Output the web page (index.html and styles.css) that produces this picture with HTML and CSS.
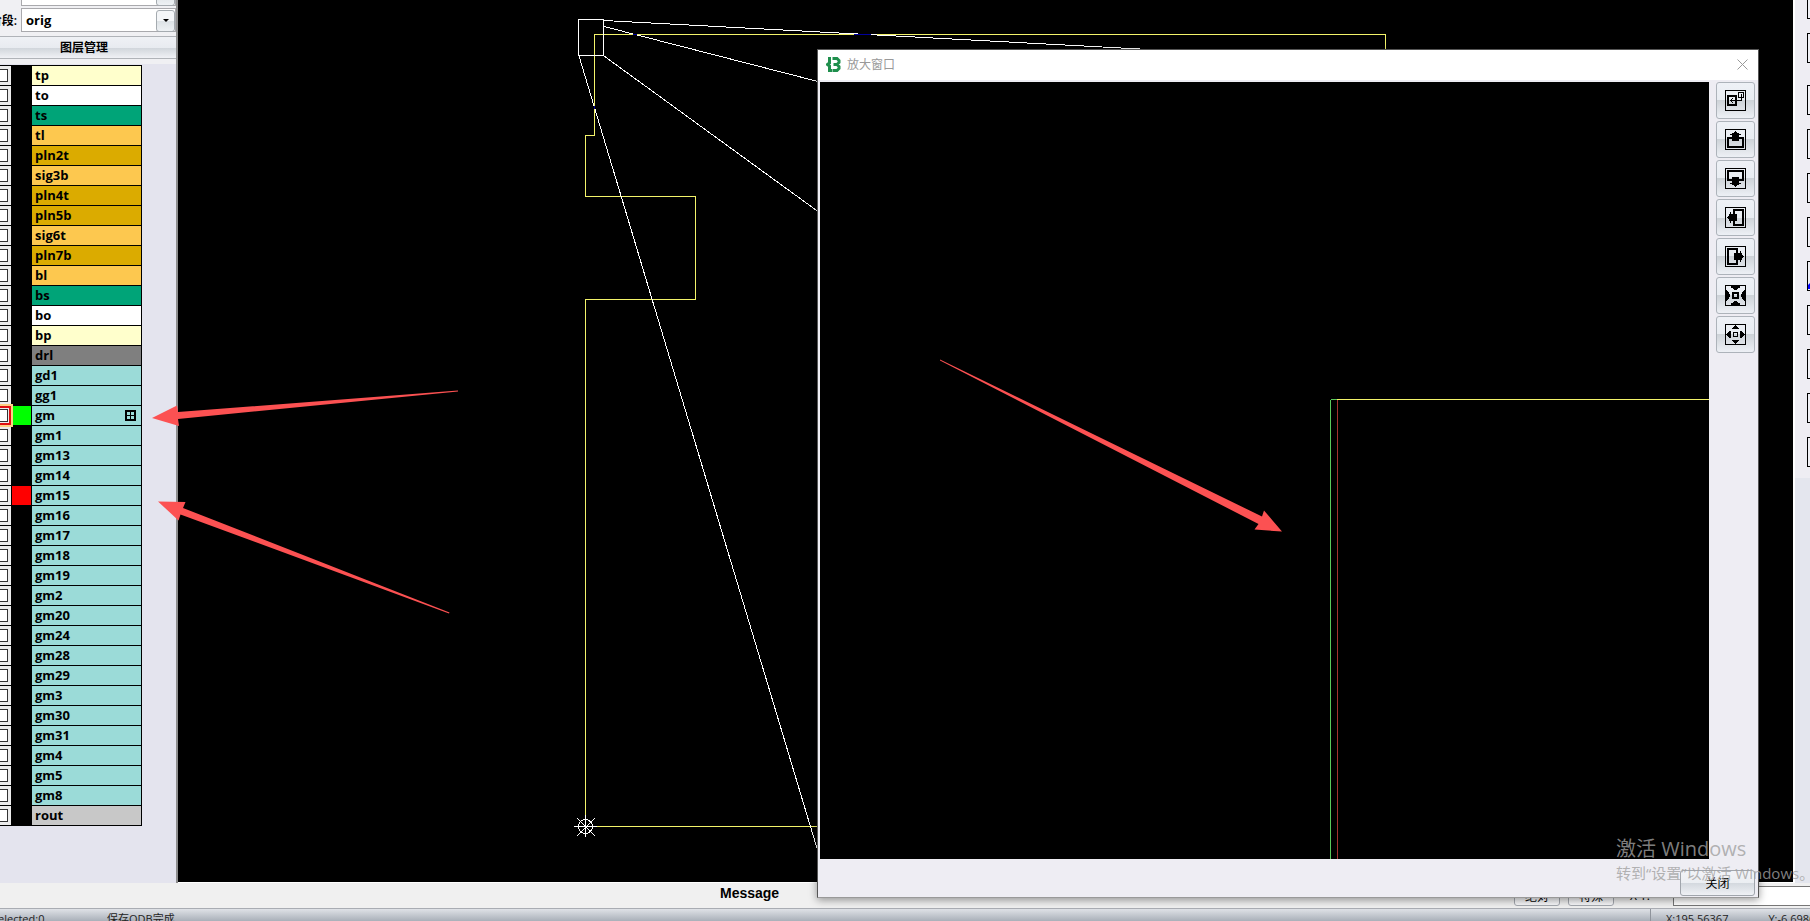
FILE: index.html
```
<!DOCTYPE html>
<html lang="zh-CN">
<head>
    <meta charset="UTF-8">
    <meta name="viewport" content="width=device-width, initial-scale=1.0">
    <title>图层管理</title>
    <link rel="stylesheet" href="styles.css">
</head>
<body>
    <div class="app">
        <div class="workspace">
            <!-- Layer panel -->
            <aside class="sidebar">
                <div class="field">
                    <span class="field-label"></span>
                    <span class="select-box"><select aria-label="料号"><option></option></select></span>
                </div>
                <div class="field">
                    <label class="field-label" for="step">阶段:</label>
                    <span class="select-box"><select id="step"><option>orig</option></select></span>
                </div>
                <h2 class="panel-title">图层管理</h2>
                <div class="layers">
                    <label class="layer paste"><span class="check"><input type="checkbox"></span><span class="swatch"></span><span class="name">tp</span></label>
                    <label class="layer silk"><span class="check"><input type="checkbox"></span><span class="swatch"></span><span class="name">to</span></label>
                    <label class="layer mask"><span class="check"><input type="checkbox"></span><span class="swatch"></span><span class="name">ts</span></label>
                    <label class="layer signal"><span class="check"><input type="checkbox"></span><span class="swatch"></span><span class="name">tl</span></label>
                    <label class="layer plane"><span class="check"><input type="checkbox"></span><span class="swatch"></span><span class="name">pln2t</span></label>
                    <label class="layer signal"><span class="check"><input type="checkbox"></span><span class="swatch"></span><span class="name">sig3b</span></label>
                    <label class="layer plane"><span class="check"><input type="checkbox"></span><span class="swatch"></span><span class="name">pln4t</span></label>
                    <label class="layer plane"><span class="check"><input type="checkbox"></span><span class="swatch"></span><span class="name">pln5b</span></label>
                    <label class="layer signal"><span class="check"><input type="checkbox"></span><span class="swatch"></span><span class="name">sig6t</span></label>
                    <label class="layer plane"><span class="check"><input type="checkbox"></span><span class="swatch"></span><span class="name">pln7b</span></label>
                    <label class="layer signal"><span class="check"><input type="checkbox"></span><span class="swatch"></span><span class="name">bl</span></label>
                    <label class="layer mask"><span class="check"><input type="checkbox"></span><span class="swatch"></span><span class="name">bs</span></label>
                    <label class="layer silk"><span class="check"><input type="checkbox"></span><span class="swatch"></span><span class="name">bo</span></label>
                    <label class="layer paste"><span class="check"><input type="checkbox"></span><span class="swatch"></span><span class="name">bp</span></label>
                    <label class="layer drill"><span class="check"><input type="checkbox"></span><span class="swatch"></span><span class="name">drl</span></label>
                    <label class="layer"><span class="check"><input type="checkbox"></span><span class="swatch"></span><span class="name">gd1</span></label>
                    <label class="layer"><span class="check"><input type="checkbox"></span><span class="swatch"></span><span class="name">gg1</span></label>
                    <label class="layer current"><span class="check"><input type="checkbox"></span><span class="swatch green"></span><span class="name">gm
                        <svg class="grid-mark" width="11" height="11" viewBox="0 0 11 11"><path d="M0 0h11v11H0z"/><path d="M2 2h3v3H2zM6 2h3v3H6zM2 6h3v3H2zM6 6h3v3H6z" fill="#9bdbd8"/></svg></span></label>
                    <label class="layer"><span class="check"><input type="checkbox"></span><span class="swatch"></span><span class="name">gm1</span></label>
                    <label class="layer"><span class="check"><input type="checkbox"></span><span class="swatch"></span><span class="name">gm13</span></label>
                    <label class="layer"><span class="check"><input type="checkbox"></span><span class="swatch"></span><span class="name">gm14</span></label>
                    <label class="layer"><span class="check"><input type="checkbox"></span><span class="swatch red"></span><span class="name">gm15</span></label>
                    <label class="layer"><span class="check"><input type="checkbox"></span><span class="swatch"></span><span class="name">gm16</span></label>
                    <label class="layer"><span class="check"><input type="checkbox"></span><span class="swatch"></span><span class="name">gm17</span></label>
                    <label class="layer"><span class="check"><input type="checkbox"></span><span class="swatch"></span><span class="name">gm18</span></label>
                    <label class="layer"><span class="check"><input type="checkbox"></span><span class="swatch"></span><span class="name">gm19</span></label>
                    <label class="layer"><span class="check"><input type="checkbox"></span><span class="swatch"></span><span class="name">gm2</span></label>
                    <label class="layer"><span class="check"><input type="checkbox"></span><span class="swatch"></span><span class="name">gm20</span></label>
                    <label class="layer"><span class="check"><input type="checkbox"></span><span class="swatch"></span><span class="name">gm24</span></label>
                    <label class="layer"><span class="check"><input type="checkbox"></span><span class="swatch"></span><span class="name">gm28</span></label>
                    <label class="layer"><span class="check"><input type="checkbox"></span><span class="swatch"></span><span class="name">gm29</span></label>
                    <label class="layer"><span class="check"><input type="checkbox"></span><span class="swatch"></span><span class="name">gm3</span></label>
                    <label class="layer"><span class="check"><input type="checkbox"></span><span class="swatch"></span><span class="name">gm30</span></label>
                    <label class="layer"><span class="check"><input type="checkbox"></span><span class="swatch"></span><span class="name">gm31</span></label>
                    <label class="layer"><span class="check"><input type="checkbox"></span><span class="swatch"></span><span class="name">gm4</span></label>
                    <label class="layer"><span class="check"><input type="checkbox"></span><span class="swatch"></span><span class="name">gm5</span></label>
                    <label class="layer"><span class="check"><input type="checkbox"></span><span class="swatch"></span><span class="name">gm8</span></label>
                    <label class="layer rout"><span class="check"><input type="checkbox"></span><span class="swatch"></span><span class="name">rout</span></label>
                </div>
            </aside>

            <!-- Board view -->
            <main class="stage">
                <svg class="drawing" width="100%" height="100%">
                    <g transform="translate(-178 0)" fill="none" shape-rendering="crispEdges">
                        <path stroke="#f3f36a" d="M1385.5 60V34.5H594.5V135.5H585.5V196.5H695.5V299.5H585.5V826.5H900"/>
                        <path stroke="#fff" d="M578.5 19.5h25v36h-25zM604 20.500L1140 49M604 26.500L818 81.500M604 56L818 211.500M579 56L819 855"/>
                        <path stroke="#00009c" d="M854 34.500h17M633 34.500h4M594.500 106v3"/>
                        <path stroke="#fff" d="M574 826.500h23M585.500 815v22M577 818l18 18M595 818l-18 18"/>
                        <circle stroke="#fff" cx="585.500" cy="826.500" r="7"/>
                    </g>
                </svg>
            </main>

            <!-- Right toolbar -->
            <nav class="tools">
                <button class="tool" aria-label="工具 1"></button>
                <button class="tool" aria-label="工具 2"></button>
                <button class="tool group" aria-label="工具 3"></button>
                <button class="tool" aria-label="工具 4"></button>
                <button class="tool" aria-label="工具 5"></button>
                <button class="tool" aria-label="工具 6"></button>
                <button class="tool" aria-label="工具 7"><svg width="28" height="28" viewBox="0 0 28 28"><path d="M0 27v-4l2-2 4 6z" fill="#00f"/></svg></button>
                <button class="tool" aria-label="工具 8"></button>
                <button class="tool" aria-label="工具 9"></button>
                <button class="tool" aria-label="工具 10"></button>
                <button class="tool" aria-label="工具 11"></button>
            </nav>
        </div>

        <div class="message-bar">
            <span class="message-title">Message</span>
            <div class="coords">
                <button class="small-btn">绝对</button>
                <button class="small-btn">特殊</button>
                <label class="xy-label" for="xy">X Y:</label>
                <input class="xy-input" id="xy" type="text">
            </div>
        </div>

        <footer class="status-bar">
            <span class="selected">Selected:0</span>
            <span class="state">保存ODB完成</span>
            <span class="position"><span>X:195.56367</span><span>Y:-6.69861</span></span>
        </footer>
    </div>

    <!-- Zoom window -->
    <section class="dialog">
        <header class="dialog-title">
            <svg width="15" height="15" viewBox="0 0 15 15" fill="none" stroke="#1f8f4d" stroke-width="3"><path d="M5 1.500H3.500V6L1.500 7.500 3.500 9v4.500H6"/><path d="M6.500 1.500H11l2 2v2l-2 2H7.500M11 7.500l2 2v2l-2 2H6.500"/></svg>
            <span>放大窗口</span>
            <button class="dialog-x" aria-label="关闭窗口"><svg width="11" height="11" viewBox="0 0 11 11" stroke="#999"><path d="M.5 .5l10 10M10.500 .5l-10 10"/></svg></button>
        </header>
        <div class="dialog-body">
            <div class="zoom-view">
                <svg class="drawing" width="100%" height="100%">
                    <g transform="translate(-820 -82)" fill="none" shape-rendering="crispEdges">
                        <path stroke="#f3f36a" d="M1337 399.500H2400"/>
                        <path stroke="#a33030" d="M1337.500 400V2000"/>
                        <path stroke="#5cc85c" d="M1337 399.500h-6"/>
                        <path stroke="#5cc85c" d="M1330.500 400V2000"/>
                    </g>
                </svg>
            </div>
            <div class="dialog-tools">
                <button class="dialog-tool" aria-label="选择区域"><svg class="icon" viewBox="0 0 21 21"><path d="M.5 .5h20v20H.5z"/><path d="M3 6h8v9H3z" stroke-width="2"/><path d="M13.500 2.500h5v5h-5zM16.500 4v6.500H5M6.500 9v3M7.500 8v1M7.500 12v1"/></svg></button>
                <button class="dialog-tool" aria-label="上移"><svg class="icon" viewBox="0 0 21 21"><path d="M.5 .5h20v20H.5z"/><path d="M7 9H3v9h15V9h-4" stroke-width="2"/><path class="solid" d="M10 2h1v1h1v1h2v1h2v1h-2v6H7V6H5V5h2V4h2V3h1z"/></svg></button>
                <button class="dialog-tool" aria-label="下移"><svg class="icon flip" viewBox="0 0 21 21"><path d="M.5 .5h20v20H.5z"/><path d="M7 9H3v9h15V9h-4" stroke-width="2"/><path class="solid" d="M10 2h1v1h1v1h2v1h2v1h-2v6H7V6H5V5h2V4h2V3h1z"/></svg></button>
                <button class="dialog-tool" aria-label="左移"><svg class="icon left" viewBox="0 0 21 21"><path d="M.5 .5h20v20H.5z"/><path d="M7 9H3v9h15V9h-4" stroke-width="2"/><path class="solid" d="M10 2h1v1h1v1h2v1h2v1h-2v6H7V6H5V5h2V4h2V3h1z"/></svg></button>
                <button class="dialog-tool" aria-label="右移"><svg class="icon right" viewBox="0 0 21 21"><path d="M.5 .5h20v20H.5z"/><path d="M7 9H3v9h15V9h-4" stroke-width="2"/><path class="solid" d="M10 2h1v1h1v1h2v1h2v1h-2v6H7V6H5V5h2V4h2V3h1z"/></svg></button>
                <button class="dialog-tool" aria-label="缩小"><svg class="icon" viewBox="0 0 21 21"><path d="M.5 .5h20v20H.5z"/><path d="M8 8h5v5H8z" stroke-width="2"/><path class="solid" d="M6 1h9v2h-2v1h-1v1H9V4H8V3H6zM6 20h9v-2h-2v-1h-1v-1H9v1H8v1H6zM1 5v11h1v-1h1v-1h1v-2h1V9H4V7H3V6H2V5zM20 5v11h-1v-1h-1v-1h-1v-2h-1V9h1V7h1V6h1V5z"/></svg></button>
                <button class="dialog-tool" aria-label="放大"><svg class="icon" viewBox="0 0 21 21"><path d="M.5 .5h20v20H.5z"/><path d="M8.500 8.500h4v4h-4z"/><path class="solid" d="M10 1h1v1h1v1h1v1h1v1H7V4h1V3h1V2h1zM10 20h1v-1h1v-1h1v-1h1v-1H7v1h1v1h1v1h1zM1 10v1h1v1h1v1h1v1h2V7H4v1H3v1H2v1zM20 10v1h-1v1h-1v1h-1v1h-2V7h2v1h1v1h1v1z"/></svg></button>
            </div>
        </div>
        <div class="dialog-footer">
            <button class="close-btn">关闭</button>
        </div>
    </section>

    <!-- Arrows -->
    <svg class="arrows" width="100%" height="100%" fill="#fc5152">
        <path d="M458 390.500L178 412l-1-6.500L152 418l27 8-1-7L458 391.500z"/>
        <path d="M449.500 612.500L183 508l2.500-6L158 501.500l20.500 19 2-6L449 613.500z"/>
        <path d="M940 359.500L1262 516.500l2-6 18 21-27.500-2 4-5.500L940 360.500z"/>
    </svg>

    <div class="watermark">
        <p class="watermark-title">激活 Windows</p>
        <p class="watermark-text">转到“设置”以激活 Windows。</p>
    </div>
</body>
</html>
```
FILE: styles.css
```
* {
    box-sizing: border-box;
}
body {
    margin: 0;
    height: 100vh;
    position: relative;
    overflow: hidden;
    font-family: "Open Sans", "Noto Sans CJK SC", sans-serif;
    font-size: 12px;
    color: #000;
    background-color: #f0f0f0;
}
button, select, input {
    font: inherit;
    color: inherit;
    margin: 0;
    padding: 0;
}
.app {
    display: flex;
    flex-direction: column;
    height: calc(100vh + 9px);
}
.workspace {
    display: flex;
    flex: 1;
    min-height: 0;
}
.drawing {
    display: block;
}

/* layer panel */
.sidebar {
    width: 178px;
    flex-shrink: 0;
    overflow: hidden;
    border-right: 2px solid #8c8c8c;
    background: linear-gradient(#f0f0f3 64px, #e4e4ee 64px);
}
.field {
    display: flex;
    align-items: center;
    height: 24px;
    margin-bottom: 2px;
}
.field:first-child {
    margin-top: -18px;
}
.field-label {
    display: flex;
    justify-content: flex-end;
    width: 21px;
    padding-right: 4px;
    flex-shrink: 0;
    font-weight: 600;
    white-space: nowrap;
}
.select-box {
    position: relative;
    flex: 1;
    height: 24px;
}
.select-box select {
    appearance: none;
    width: 100%;
    height: 24px;
    padding-left: 4px;
    border: 1px solid #a9a9ad;
    border-radius: 0;
    background-color: #fff;
    font-size: 13px;
    font-weight: 700;
}
.select-box::before {
    content: "";
    position: absolute;
    top: 11px;
    right: 7px;
    z-index: 1;
    border: 3px solid transparent;
    border-top-color: #000;
    border-bottom: 0;
    pointer-events: none;
}
.select-box::after {
    content: "";
    position: absolute;
    top: 2px;
    right: 1px;
    width: 17px;
    height: 20px;
    border: 1px solid #a5abb0;
    border-radius: 3px;
    background: linear-gradient(#f4f6f8 50%, #dde2e6 50%, #eef1f4);
    pointer-events: none;
}
.panel-title {
    height: 23px;
    margin: 4px 0 6px;
    padding-right: 8px;
    border-top: 1px solid #b0b3b8;
    border-bottom: 1px solid #b0b3b8;
    background: linear-gradient(#eff1f5, #e8ebf0 50%, #cfd4da 50%, #f0f1f5);
    font-size: 12px;
    font-weight: 600;
    line-height: 21px;
    text-align: center;
}
.layers {
    display: flex;
    flex-direction: column;
    gap: 1px;
    width: 142px;
    padding: 1px 1px 1px 0;
    background-color: #000;
}
.layer {
    display: flex;
    height: 19px;
    gap: 1px;
}
.check {
    display: flex;
    justify-content: flex-end;
    align-items: center;
    width: 11px;
    padding-right: 3px;
    background-color: #ececec;
}
.check input {
    appearance: none;
    flex-shrink: 0;
    width: 13px;
    height: 13px;
    border: 1px solid #333;
    background-color: #fff;
}
.swatch {
    width: 19px;
}
.green {
    background-color: #0f0;
}
.red {
    background-color: #f00;
}
.name {
    display: flex;
    flex: 1;
    align-items: center;
    justify-content: space-between;
    padding: 0 5px 0 3px;
    background-color: #9bdbd8;
    font-size: 13px;
    font-weight: 700;
    line-height: 19px;
}
.paste .name {
    background-color: #ffffcc;
}
.silk .name {
    background-color: #fff;
}
.mask .name {
    background-color: #00a478;
}
.signal .name {
    background-color: #fdc84f;
}
.plane .name {
    background-color: #dbab00;
}
.drill .name {
    background-color: #7f7f7f;
}
.rout .name {
    background-color: #c8c8c8;
}
.current .check {
    position: relative;
    padding-right: 1px;
    border: 2px solid #e01010;
    border-left: 0;
    outline: 2px solid #fdd084;
}

/* board view */
.stage {
    flex: 1;
    min-width: 0;
    background-color: #000;
    border-bottom: 1px solid #fff;
}

/* right toolbar */
.tools {
    display: flex;
    flex-direction: column;
    gap: 14px;
    width: 17px;
    flex-shrink: 0;
    overflow: hidden;
    padding-left: 12px;
    border-left: 2px solid #fff;
    background: linear-gradient(#eeedf3 478px, #e4e6ee 478px);
}
.tool {
    flex-shrink: 0;
    width: 30px;
    height: 30px;
    border: 1px solid #000;
    background-color: #f0f0f5;
}
.tool:first-child {
    margin-top: -11px;
}
.tool.group {
    margin-top: 8px;
}
.tool svg {
    display: block;
}

/* bottom bars */
.message-bar {
    display: flex;
    justify-content: space-between;
    height: 25px;
    flex-shrink: 0;
    padding-left: 720px;
}
.message-title {
    font-family: "Liberation Sans", sans-serif;
    font-size: 14px;
    font-weight: 700;
    line-height: 20px;
}
.coords {
    display: flex;
    align-items: flex-start;
    gap: 8px;
    padding-top: 3px;
}
.small-btn {
    width: 46px;
    height: 20px;
    border: 1px solid #a5a9b0;
    border-radius: 3px;
    background: linear-gradient(#f4f6f8, #f8f8fa);
    line-height: 20px;
}
.xy-label {
    width: 43px;
    padding-left: 8px;
    line-height: 20px;
}
.xy-input {
    width: 137px;
    height: 20px;
    border: 1px solid #777;
    border-right: 0;
    background-color: #fff;
}
.status-bar {
    display: flex;
    height: 22px;
    flex-shrink: 0;
    border-top: 1px solid #a9acb3;
    background: linear-gradient(#dfe2e7, #a9b0b9 12px, #c4c8d0);
    font-size: 11px;
    line-height: 20px;
    color: #222;
}
.selected {
    width: 115px;
    margin-left: -8px;
}
.state {
    flex: 1;
}
.position {
    display: flex;
    gap: 40px;
    width: 160px;
    padding-left: 15px;
    border-left: 1px solid #8f949c;
    white-space: nowrap;
}

/* zoom window */
.dialog {
    position: absolute;
    left: 817px;
    top: 49px;
    display: flex;
    flex-direction: column;
    width: 942px;
    height: 849px;
    border: 1px solid #555;
    border-bottom-color: #999;
    background-color: #eeedf3;
    box-shadow: 0 2px 8px rgba(0, 0, 0, 0.4);
}
.dialog-title {
    display: flex;
    align-items: center;
    gap: 6px;
    height: 30px;
    margin-bottom: 2px;
    padding: 0 10px 2px 8px;
    background-color: #fff;
    color: #999;
}
.dialog-x {
    display: flex;
    margin-left: auto;
    border: 0;
    background: none;
}
.dialog-body {
    display: flex;
    flex: 1;
    gap: 7px;
    min-height: 0;
    padding: 0 3px 0 2px;
}
.zoom-view {
    flex: 1;
    min-width: 0;
    background-color: #000;
}
.dialog-tools {
    display: flex;
    flex-direction: column;
    gap: 2px;
}
.dialog-tool {
    display: flex;
    align-items: center;
    justify-content: center;
    width: 39px;
    height: 37px;
    border: 1px solid #adb3ba;
    border-radius: 3px;
    background: linear-gradient(#eef1f6, #e9edf2 50%, #ced3d8 50%, #edf0f5);
}
.icon {
    width: 21px;
    height: 21px;
    fill: none;
    stroke: #000;
    shape-rendering: crispEdges;
}
.icon .solid {
    fill: #000;
    stroke: none;
}
.flip {
    transform: scaleY(-1);
}
.left {
    transform: rotate(-90deg);
}
.right {
    transform: rotate(90deg);
}
.dialog-footer {
    display: flex;
    justify-content: flex-end;
    align-items: flex-end;
    height: 38px;
    padding: 0 3px 1px 0;
}
.close-btn {
    width: 75px;
    height: 26px;
    border: 1px solid #a0a5ac;
    border-radius: 3px;
    background: linear-gradient(#f1f3f7, #ebeef2 50%, #d3d8de 50%, #eff1f5);
}

/* overlays */
.arrows {
    position: absolute;
    left: 0;
    top: 0;
    pointer-events: none;
}
.watermark {
    position: absolute;
    right: 0;
    bottom: 38px;
    width: 194px;
    color: rgba(160, 160, 160, 0.8);
    white-space: nowrap;
    pointer-events: none;
}
.watermark p {
    margin: 0;
}
.watermark-title {
    font-size: 20px;
    line-height: 28px;
}
.watermark-text {
    font-size: 15px;
    line-height: 20px;
}
```
